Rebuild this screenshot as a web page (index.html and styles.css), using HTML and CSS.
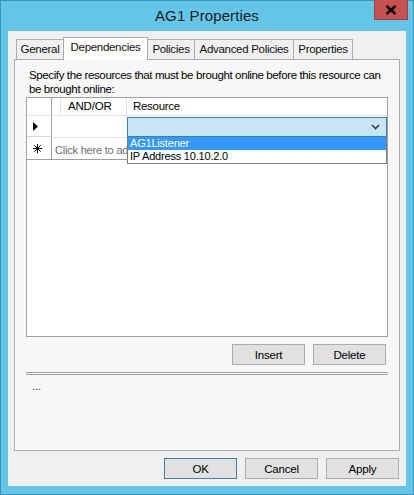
FILE: index.html
```html
<!DOCTYPE html>
<html>
<head>
<meta charset="utf-8">
<link rel="stylesheet" href="styles.css">
</head>
<body>
<div class="window">
  <div class="titlebar">
    <span></span>
    <span class="title">AG1 Properties</span>
    <span class="close"><svg width="12" height="10" viewBox="0 0 12 10"><path d="M1.5 1 L10.5 9 M10.5 1 L1.5 9" stroke="#000" stroke-width="2.4"/></svg></span>
  </div>
  <div class="client">
    <div class="tabs">
      <div class="tab t-general">General</div>
      <div class="tab t-dep active">Dependencies</div>
      <div class="tab t-pol">Policies</div>
      <div class="tab t-adv">Advanced Policies</div>
      <div class="tab t-prop">Properties</div>
    </div>
    <div class="panel">
      <p class="intro">Specify the resources that must be brought online before this resource can be brought online:</p>
      <div class="grid">
        <div class="row head">
          <div class="rh"></div>
          <div class="c-gap"></div>
          <div class="c-andor">AND/OR</div>
          <div class="c-res">Resource</div>
        </div>
        <div class="row r1">
          <div class="rh"><svg width="5" height="9" viewBox="0 0 5 9"><path d="M0 0 L5 4.5 L0 9 Z" fill="#000"/></svg></div>
          <div class="cell andor"></div>
          <div class="cell res">
            <div class="combo"><svg width="9" height="6" viewBox="0 0 9 6"><path d="M1 1 L4.5 4.5 L8 1" fill="none" stroke="#404040" stroke-width="1.6"/></svg></div>
          </div>
        </div>
        <div class="row r2">
          <div class="rh star"><svg width="9" height="9" viewBox="0 0 9 9"><path d="M4.5 0 V9 M0 4.5 H9 M1.3 1.3 L7.7 7.7 M7.7 1.3 L1.3 7.7" stroke="#000" stroke-width="1"/></svg></div>
          <div class="cell newrow">Click here to add</div>
          <ul class="dropdown">
            <li class="sel">AG1Listener</li>
            <li>IP Address 10.10.2.0</li>
          </ul>
        </div>
      </div>
      <div class="grid-buttons">
        <button class="btn">Insert</button>
        <button class="btn">Delete</button>
      </div>
      <div class="sep"></div>
      <div class="expr">...</div>
    </div>
    <div class="dialog-buttons">
      <button class="btn default">OK</button>
      <button class="btn">Cancel</button>
      <button class="btn">Apply</button>
    </div>
  </div>
</div>
</body>
</html>
```

FILE: styles.css
```css
* { box-sizing: border-box; }
html, body { margin: 0; padding: 0; }
body {
  font-family: "Liberation Sans", Arial, sans-serif;
  font-size: 11px;
  color: #000;
  background: #63c6e8;
}
.window {
  width: 414px;
  height: 495px;
  background: #63c6e8;
  border: 1px solid #3a93bd;
  display: flex;
  flex-direction: column;
}
.titlebar {
  height: 30px;
  display: grid;
  grid-template-columns: 1fr auto 1fr;
  align-items: start;
}
.title {
  font-size: 15px;
  color: #1b1b1b;
  padding-top: 6px;
  letter-spacing: 0.1px;
}
.close {
  justify-self: end;
  margin-right: 5px;
  width: 34px;
  height: 20px;
  margin-top: -1px;
  background: #c75050;
  border: 1px solid #a63d3d;
  border-top: none;
  display: flex;
  align-items: center;
  justify-content: center;
}
.client {
  margin: 0 7px;
  height: 455px;
  background: #f0f0f0;
  display: flex;
  flex-direction: column;
  padding: 5px 7px 0 6px;
}
.tabs {
  display: flex;
  align-items: flex-end;
  padding-left: 2px;
  height: 23px;
  position: relative;
  z-index: 1;
}
.tab {
  height: 20px;
  border: 1px solid #acacac;
  border-bottom: none;
  margin-right: -1px;
  background: #f0f0f0;
  padding-top: 3px;
  text-align: center;
  white-space: nowrap;
  font-size: 11.5px;
  letter-spacing: -0.3px;
  color: #111;
}
.t-general { width: 48px; }
.t-dep { width: 85px; }
.t-pol { width: 48px; }
.t-adv { width: 100px; }
.t-prop { width: 60px; }
.tab.active {
  height: 23px;
  background: #fff;
  padding-top: 3px;
  margin-bottom: -1px;
}
.panel {
  width: 386px;
  height: 392px;
  border: 1px solid #acacac;
  background: #f7f7f7;
  padding: 8px 11px 0 11px;
  display: flex;
  flex-direction: column;
}
.intro {
  margin: 0 0 0 3px;
  line-height: 14px;
  font-size: 11.5px;
  letter-spacing: -0.38px;
  height: 29px;
}
.grid {
  width: 362px;
  height: 240px;
  border: 1px solid #a0a0a0;
  background: #fff;
  flex: none;
}
.row {
  display: flex;
  position: relative;
}
.head {
  height: 18px;
  border-bottom: 1px solid #e3e3e3;
}
.rh {
  width: 25px;
  flex: none;
  border-right: 1px solid #a0a0a0;
  display: flex;
  align-items: center;
  padding-left: 6px;
}
.c-gap { width: 9px; border-right: 1px solid #e3e3e3; }
.c-andor {
  width: 66px;
  border-right: 1px solid #e3e3e3;
  padding: 2px 0 0 7px;
  font-size: 11.5px;
  letter-spacing: -0.2px;
}
.c-res {
  flex: 1;
  padding: 2px 0 0 6px;
  font-size: 11.5px;
  letter-spacing: -0.3px;
}
.r1 { height: 21px; }
.r1 .rh { border-bottom: 1px solid #d8d8d8; }
.cell.andor { width: 75px; }
.cell.res { flex: 1; padding-top: 1px; }
.combo {
  width: 260px;
  height: 20px;
  background: #c7e5f7;
  border: 1px solid #3c7fb1;
  display: flex;
  align-items: center;
  justify-content: flex-end;
  padding-right: 6px;
}
.r2 { height: 23px; }
.r2 .rh { border-bottom: 1px solid #a0a0a0; }
.star { padding-left: 6px; }
.newrow {
  flex: 1;
  color: #6d6d6d;
  font-size: 11px;
  letter-spacing: -0.2px;
  padding: 6px 0 0 3px;
  white-space: nowrap;
  overflow: hidden;
  border-top: 1px solid #e3e3e3;
  border-bottom: 1px solid #a0a0a0;
}
.dropdown {
  position: absolute;
  left: 100px;
  top: 0;
  width: 260px;
  margin: 0;
  padding: 0;
  list-style: none;
  background: #fff;
  border: 1px solid #7a7a7a;
  border-top: none;
  font-size: 11px;
  letter-spacing: -0.2px;
}
.dropdown li {
  height: 13px;
  line-height: 13px;
  padding-left: 2px;
}
.dropdown li.sel { background: #3399ff; color: #fff; }
.grid-buttons {
  display: flex;
  justify-content: flex-end;
  gap: 8px;
  padding-right: 2px;
  margin-top: 7px;
}
.btn {
  width: 73px;
  height: 21px;
  background: #e1e1e1;
  border: 1px solid #adadad;
  font-family: "Liberation Sans", Arial, sans-serif;
  font-size: 11.5px;
  letter-spacing: -0.2px;
  color: #000;
  padding: 0;
  border-radius: 0;
}
.btn.default { border-color: #3c7fb1; }
.sep {
  margin-top: 7px;
  width: 362px;
  height: 3px;
  flex: none;
  border-top: 1px solid #a0a0a0;
  border-bottom: 1px solid #a0a0a0;
}
.expr {
  margin-top: 5px;
  padding-left: 6px;
  font-size: 11px;
  color: #333;
}
.dialog-buttons {
  display: flex;
  justify-content: flex-end;
  gap: 8px;
  margin-top: 7px;
}
```
